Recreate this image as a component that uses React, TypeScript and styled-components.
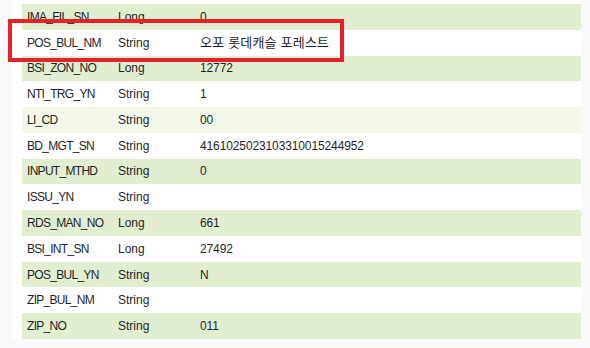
import React from 'react';
import styled, { createGlobalStyle } from 'styled-components';

interface Field {
  name: string;
  type: string;
  value: string;
}

const fields: Field[] = [
  { name: 'IMA_FIL_SN', type: 'Long', value: '0' },
  { name: 'POS_BUL_NM', type: 'String', value: '오포 롯데캐슬 포레스트' },
  { name: 'BSI_ZON_NO', type: 'Long', value: '12772' },
  { name: 'NTI_TRG_YN', type: 'String', value: '1' },
  { name: 'LI_CD', type: 'String', value: '00' },
  { name: 'BD_MGT_SN', type: 'String', value: '4161025023103310015244952' },
  { name: 'INPUT_MTHD', type: 'String', value: '0' },
  { name: 'ISSU_YN', type: 'String', value: '' },
  { name: 'RDS_MAN_NO', type: 'Long', value: '661' },
  { name: 'BSI_INT_SN', type: 'Long', value: '27492' },
  { name: 'POS_BUL_YN', type: 'String', value: 'N' },
  { name: 'ZIP_BUL_NM', type: 'String', value: '' },
  { name: 'ZIP_NO', type: 'String', value: '011' },
];

const hasHangul = (s: string) => /[\uac00-\ud7a3]/.test(s);

const GlobalStyle = createGlobalStyle`
  html, body {
    margin: 0;
    padding: 0;
    background: #f9f9f9;
    overflow: hidden;
  }
`;

const Page = styled.div`
  position: relative;
  width: 590px;
  height: 348px;
  overflow: hidden;
`;

const Panel = styled.div`
  margin-left: 12px;
  width: 569px;
  padding: 4px 0 0 10px;
  box-sizing: border-box;
  background: #ffffff;
`;

const Row = styled.div<{ $tone: 'green' | 'white' | 'hover' }>`
  display: grid;
  grid-template-columns: 91px 82px 1fr;
  align-items: center;
  height: 25.77px;
  padding-left: 5px;
  background: ${({ $tone }) =>
    $tone === 'green' ? '#e1eecf' : $tone === 'hover' ? '#f3f8ea' : '#ffffff'};
  font-family: 'Liberation Sans', 'Noto Sans CJK KR', sans-serif;
  font-size: 12px;
  color: #1f1f2a;
  white-space: nowrap;
`;

const NameCell = styled.span`
  line-height: 14px;
  letter-spacing: -0.7px;
`;

const TypeCell = styled.span`
  line-height: 14px;
`;

const ValueCell = styled.span<{ $wide: boolean }>`
  line-height: 14px;
  font-size: ${({ $wide }) => ($wide ? '13px' : '12px')};
  letter-spacing: ${({ $wide }) => ($wide ? '0.2px' : '-0.12px')};
`;

const Highlight = styled.div`
  position: absolute;
  left: 8px;
  top: 19px;
  width: 336px;
  height: 43px;
  box-sizing: border-box;
  border: 4px solid #e5212a;
  pointer-events: none;
`;

const App: React.FC = () => (
  <Page>
    <GlobalStyle />
    <Panel>
      {fields.map((f, i) => (
        <Row key={f.name} $tone={i === 4 ? 'hover' : i % 2 === 0 ? 'green' : 'white'}>
          <NameCell>{f.name}</NameCell>
          <TypeCell>{f.type}</TypeCell>
          <ValueCell $wide={hasHangul(f.value)}>{f.value}</ValueCell>
        </Row>
      ))}
    </Panel>
    <Highlight />
  </Page>
);

export default App;
